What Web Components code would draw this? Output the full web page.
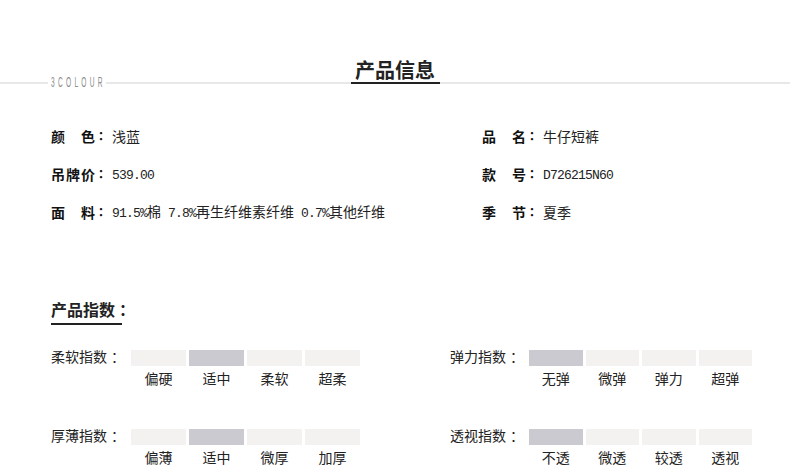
<!DOCTYPE html>
<html lang="zh-CN">
<head>
<meta charset="utf-8">
<title>产品信息</title>
<style>
  html, body { margin: 0; background: #fff; }
  body { font-family: "Noto Sans CJK SC", sans-serif; color: #222; overflow: hidden; }
</style>
</head>
<body>
<product-page>
  <page-title brand="3COLOUR">产品信息</page-title>
  <info-grid>
    <info-item label="颜色">浅蓝</info-item>
    <info-item label="品名">牛仔短裤</info-item>
    <info-item label="吊牌价"><mono-text>539.00</mono-text></info-item>
    <info-item label="款号"><mono-text>D726215N60</mono-text></info-item>
    <info-item label="面料"><mono-text>91.5%</mono-text>棉<mono-text> 7.8%</mono-text>再生纤维素纤维<mono-text> 0.7%</mono-text>其他纤维</info-item>
    <info-item label="季节">夏季</info-item>
  </info-grid>
  <section-heading>产品指数</section-heading>
  <index-grid>
    <index-scale label="柔软指数" options="偏硬,适中,柔软,超柔" active="1"></index-scale>
    <index-scale label="弹力指数" options="无弹,微弹,弹力,超弹" active="0" narrow></index-scale>
    <index-scale label="厚薄指数" options="偏薄,适中,微厚,加厚" active="1"></index-scale>
    <index-scale label="透视指数" options="不透,微透,较透,透视" active="0" narrow></index-scale>
  </index-grid>
</product-page>

<script>
  class ProductPage extends HTMLElement {
    constructor() {
      super();
      this.attachShadow({ mode: "open" }).innerHTML = `
        <style>
          :host { display: block; width: 790px; height: 471px; }
        </style>
        <slot></slot>
      `;
    }
  }

  class PageTitle extends HTMLElement {
    constructor() {
      super();
      this.attachShadow({ mode: "open" }).innerHTML = `
        <style>
          :host {
            display: block;
            position: relative;
            height: 82px;
            border-bottom: 2px solid #e8e8e8;
            text-align: center;
          }
          .title {
            box-sizing: border-box;
            display: inline-block;
            width: 89px;
            height: 84px;
            padding-top: 57px;
            border-bottom: 2px solid #222;
            font-size: 20px;
            font-weight: 700;
            line-height: 25px;
            white-space: nowrap;
            color: #222;
          }
          .brand {
            display: flex;
            align-items: center;
            position: absolute;
            left: 48px;
            top: 77px;
            width: 58px;
            height: 11px;
            background: #fff;
          }
          .brand span {
            width: 55px;
            margin-left: 3px;
            font: 14px/11px "Liberation Sans", sans-serif;
            letter-spacing: 7px;
            color: #8c8c8c;
            transform: scaleX(0.47);
            transform-origin: left center;
            white-space: nowrap;
          }
        </style>
        <div class="brand"><span></span></div>
        <div class="title"><slot></slot></div>
      `;
    }
    connectedCallback() {
      this.shadowRoot.querySelector(".brand span").textContent = this.getAttribute("brand");
    }
  }

  class InfoGrid extends HTMLElement {
    constructor() {
      super();
      this.attachShadow({ mode: "open" }).innerHTML = `
        <style>
          :host {
            display: grid;
            grid-template-columns: 431px 1fr;
            grid-auto-rows: 38px;
            margin-top: 34px;
            padding-left: 51px;
          }
        </style>
        <slot></slot>
      `;
    }
  }

  class InfoItem extends HTMLElement {
    constructor() {
      super();
      this.attachShadow({ mode: "open" }).innerHTML = `
        <style>
          :host {
            display: flex;
            align-items: center;
            height: 36px;
            font-size: 14px;
            line-height: 36px;
          }
          .name {
            width: 44px;
            font-weight: 700;
            text-align-last: justify;
            color: #111;
          }
          .colon {
            width: 17px;
            font-size: 12px;
            font-weight: 700;
            font-family: "Noto Sans CJK TC", sans-serif;
            color: #111;
          }
          .value { color: #222; white-space: nowrap; }
        </style>
        <span class="name"></span><span class="colon">：</span>
        <span class="value"><slot></slot></span>
      `;
    }
    connectedCallback() {
      this.shadowRoot.querySelector(".name").textContent = this.getAttribute("label");
    }
  }

  class MonoText extends HTMLElement {
    constructor() {
      super();
      this.attachShadow({ mode: "open" }).innerHTML =
        `<style>:host { display: inline; font-family: "Liberation Mono", monospace; font-size: 13px; letter-spacing: -0.8px; }</style><slot></slot>`;
    }
  }

  class SectionHeading extends HTMLElement {
    constructor() {
      super();
      this.attachShadow({ mode: "open" }).innerHTML = `
        <style>
          :host {
            display: block;
            width: 71px;
            height: 30px;
            margin: 61px 0 0 51px;
            border-bottom: 2px solid #222;
            font-size: 16px;
            font-weight: 700;
            line-height: 32px;
            white-space: nowrap;
            color: #222;
          }
          .colon { padding-left: 4px; font-family: "Noto Sans CJK TC", sans-serif; }
        </style>
        <slot></slot><span class="colon">：</span>
      `;
    }
  }

  class IndexGrid extends HTMLElement {
    constructor() {
      super();
      this.attachShadow({ mode: "open" }).innerHTML = `
        <style>
          :host {
            display: grid;
            grid-template-columns: 399px 1fr;
            row-gap: 24px;
            margin-top: 25px;
            padding-left: 51px;
          }
        </style>
        <slot></slot>
      `;
    }
  }

  class IndexScale extends HTMLElement {
    constructor() {
      super();
      this.attachShadow({ mode: "open" }).innerHTML = `
        <style>
          :host {
            --bars: 229px;
            --name: 80px;
            display: grid;
            grid-template-columns: var(--name) var(--bars);
            grid-template-rows: 16px 24px;
            height: 55px;
            font-size: 14px;
            color: #222;
          }
          :host([narrow]) { --bars: 223px; --name: 79px; }
          .name { line-height: 13px; white-space: nowrap; }
          .colon { padding-left: 4px; font-family: "Noto Sans CJK TC", sans-serif; }
          .bars, .ticks {
            display: grid;
            grid-template-columns: repeat(4, 1fr);
            column-gap: 3px;
          }
          .bars i { display: block; background: #f3f2f0; }
          .bars i.on { background: #cbcad0; }
          .ticks { grid-column: 2; text-align: center; line-height: 24px; }
        </style>
        <div class="name"></div>
        <div class="bars"></div>
        <div class="ticks"></div>
      `;
    }
    connectedCallback() {
      const root = this.shadowRoot;
      const options = this.getAttribute("options").split(",");
      const active = Number(this.getAttribute("active"));
      root.querySelector(".name").innerHTML =
        `${this.getAttribute("label")}<span class="colon">：</span>`;
      root.querySelector(".bars").innerHTML = options
        .map((_, i) => `<i class="${i === active ? "on" : ""}"></i>`)
        .join("");
      root.querySelector(".ticks").innerHTML = options
        .map((o) => `<span>${o}</span>`)
        .join("");
    }
  }

  customElements.define("product-page", ProductPage);
  customElements.define("page-title", PageTitle);
  customElements.define("info-grid", InfoGrid);
  customElements.define("info-item", InfoItem);
  customElements.define("mono-text", MonoText);
  customElements.define("section-heading", SectionHeading);
  customElements.define("index-grid", IndexGrid);
  customElements.define("index-scale", IndexScale);
</script>
</body>
</html>
